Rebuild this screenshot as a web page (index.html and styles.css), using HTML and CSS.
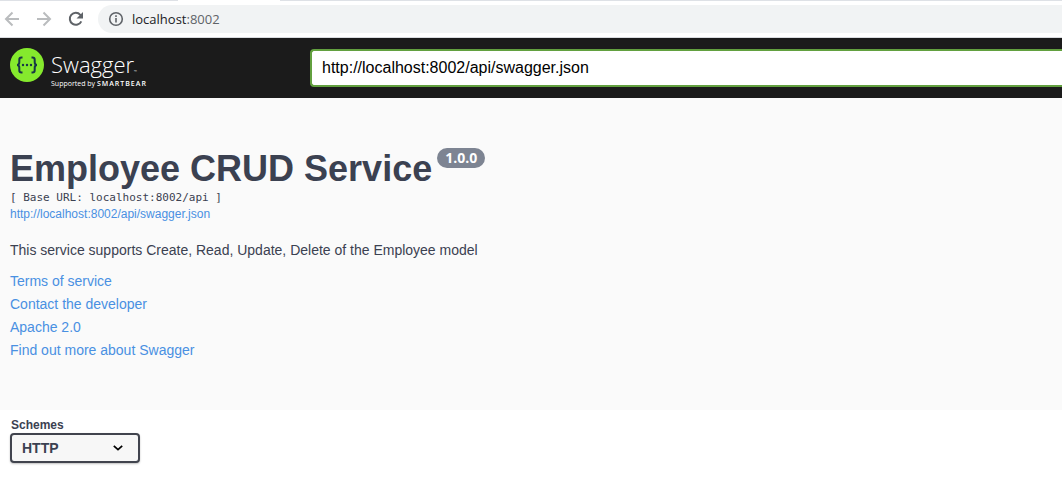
FILE: index.html
```html
<!DOCTYPE html>
<html lang="en">
<head>
<meta charset="utf-8">
<title>Swagger UI</title>
<link rel="stylesheet" href="styles.css">
</head>
<body>
<div class="tab-strip"><div class="active-tab"></div></div>
<nav class="toolbar" aria-label="Browser">
  <button class="nav-button" type="button" aria-label="Back">
    <svg width="16" height="16" viewBox="0 0 16 16"><path d="M15 8H2.500M8.500 1.500 2 8l6.500 6.500"/></svg>
  </button>
  <button class="nav-button" type="button" aria-label="Forward">
    <svg width="16" height="16" viewBox="0 0 16 16"><path d="M1 8h12.500M7.500 1.500 14 8l-6.500 6.500"/></svg>
  </button>
  <button class="nav-button reload" type="button" aria-label="Reload">
    <svg width="16" height="16" viewBox="0 0 16 16"><path d="M13.300 10.300A6 6 0 1 1 12.300 3.800L14 5.500"/><path class="solid" d="M15 1v6.500H8.500z"/></svg>
  </button>
  <div class="address">
    <svg class="info-icon" width="16" height="16" viewBox="0 0 16 16"><circle cx="8" cy="8" r="6.300"/><path d="M8 7v4.500M8 4.300v1.700"/></svg>
    <span>localhost<span class="port">:8002</span></span>
  </div>
</nav>
<header class="topbar">
  <a class="logo" href="#" aria-label="Swagger">
    <svg width="34" height="34" viewBox="0 0 34 34">
      <circle class="disc" cx="17" cy="17" r="17"/>
      <path class="brace" d="M12.500 9.500h-1c-1.500 0-2.200.8-2.200 2.200v2.600c0 1.600-.8 2.700-2.300 2.700 1.500 0 2.300 1.100 2.300 2.700v2.600c0 1.400.7 2.200 2.200 2.200h1M21.500 9.500h1c1.500 0 2.200.8 2.200 2.200v2.600c0 1.600.8 2.700 2.300 2.700-1.500 0-2.300 1.100-2.300 2.700v2.600c0 1.400-.7 2.200-2.200 2.200h-1"/>
      <g class="dots"><circle cx="13" cy="17" r="1.200"/><circle cx="17" cy="17" r="1.200"/><circle cx="21" cy="17" r="1.200"/></g>
    </svg>
    <span class="wordmark">
      <span class="brand">Swagger<span class="tm">™</span></span>
      <span class="support">Supported by <b>SMARTBEAR</b></span>
    </span>
  </a>
  <input class="spec-url" type="text" aria-label="Specification URL" value="http://localhost:8002/api/swagger.json">
</header>
<main>
  <section class="info">
    <h1>Employee CRUD Service<span class="version">1.0.0</span></h1>
    <div class="base-url">[ Base URL: localhost:8002/api ]</div>
    <a class="spec-link" href="#">http://localhost:8002/api/swagger.json</a>
    <p>This service supports Create, Read, Update, Delete of the Employee model</p>
    <div class="links">
      <a href="#">Terms of service</a>
      <a href="#">Contact the developer</a>
      <a href="#">Apache 2.0</a>
      <a href="#">Find out more about Swagger</a>
    </div>
  </section>
  <section class="schemes">
    <label for="scheme">Schemes</label>
    <div class="select-wrap">
      <select id="scheme"><option>HTTP</option></select>
      <svg class="chevron" width="10" height="6" viewBox="0 0 10 6"><path d="M.800.800 5 4.700 9.200.800"/></svg>
    </div>
  </section>
</main>
</body>
</html>
```
FILE: styles.css
```css
* { box-sizing: border-box; }
body {
  margin: 0;
  background: #fff;
  color: #3b4151;
  font-family: "Liberation Sans", Arial, sans-serif;
  overflow-x: hidden;
}
a { color: #4990e2; text-decoration: none; }

.tab-strip { height: 1px; background: #dee1e6; padding-left: 178px; }
.active-tab { width: 102px; height: 1px; background: #fff; }
.toolbar {
  display: flex;
  align-items: center;
  height: 37px;
  padding-left: 4px;
  border-bottom: 1px solid #dadce0;
}
.nav-button {
  display: flex;
  padding: 0;
  margin-right: 16px;
  border: 0;
  background: none;
}
.nav-button svg { fill: none; stroke: #babcbe; stroke-width: 2; }
.nav-button.reload { margin-right: 14px; }
.nav-button.reload svg { stroke: #5f6368; }
.nav-button .solid { fill: #5f6368; stroke: none; }
.address {
  display: flex;
  flex: 1;
  align-items: center;
  gap: 8px;
  height: 28px;
  padding-left: 10px;
  border-radius: 14px 0 0 14px;
  background: #f1f3f4;
  color: #202124;
  font: 13px/20px "Open Sans", "Noto Sans", sans-serif;
}
.port { color: #5f6368; }
.info-icon { fill: none; stroke: #5f6368; stroke-width: 1.600; }

.topbar {
  display: flex;
  align-items: center;
  height: 60px;
  padding-left: 10px;
  background: #1b1b1b;
}
.logo {
  display: flex;
  flex: 0 0 300px;
  align-items: flex-start;
  gap: 7px;
  color: #fff;
  font-family: "Open Sans", sans-serif;
}
.disc { fill: #85ea2d; }
.brace { fill: none; stroke: #173647; stroke-width: 2; }
.dots { fill: #173647; }
.wordmark { display: flex; flex-direction: column; white-space: nowrap; }
.brand { font-size: 22px; font-weight: 300; line-height: 32px; }
.tm { font-size: 4px; line-height: 0; }
.support { font-size: 7px; line-height: 8px; }
.support b { font-weight: 600; letter-spacing: 1px; }
.spec-url {
  flex: 1;
  min-width: 0;
  height: 38px;
  padding: 0 10px;
  border: 2px solid #62a03f;
  border-right: 0;
  border-radius: 4px 0 0 4px;
  background: #fff;
  color: #000;
  font: 16px "Liberation Sans", Arial, sans-serif;
}

.info { padding: 48px 10px; background: #fafafa; font-size: 14px; }
h1 {
  display: flex;
  align-items: flex-start;
  gap: 5px;
  margin: 0;
  font-size: 36px;
  line-height: 46px;
}
.version {
  margin-top: 2px;
  padding: 0 8px;
  border-radius: 10px;
  background: #7d8492;
  color: #fff;
  font: bold 14px/20px "Open Sans", sans-serif;
}
.base-url { font: 11px/12px "DejaVu Sans Mono", monospace; }
.spec-link { display: block; font-size: 12px; line-height: 20px; }
.info p { margin: 17px 0 11px; line-height: 18px; }
.links { display: flex; flex-direction: column; align-items: flex-start; }
.links a { line-height: 23px; }

.schemes { padding: 8px 10px; }
.schemes label {
  display: block;
  padding-left: 1px;
  font-size: 12px;
  font-weight: 700;
  line-height: 15px;
}
.select-wrap { display: grid; width: 130px; align-items: center; }
.select-wrap > * { grid-area: 1 / 1; }
select {
  appearance: none;
  width: 100%;
  height: 30px;
  padding: 0 10px;
  border: 2px solid #41444e;
  border-radius: 4px;
  background: #f7f7f7;
  box-shadow: 0 1px 2px rgba(0, 0, 0, .25);
  color: #3b4151;
  font: bold 14px "Liberation Sans", Arial, sans-serif;
}
.chevron {
  justify-self: end;
  margin-right: 17px;
  fill: none;
  stroke: #000;
  stroke-width: 1.700;
  pointer-events: none;
}
```
